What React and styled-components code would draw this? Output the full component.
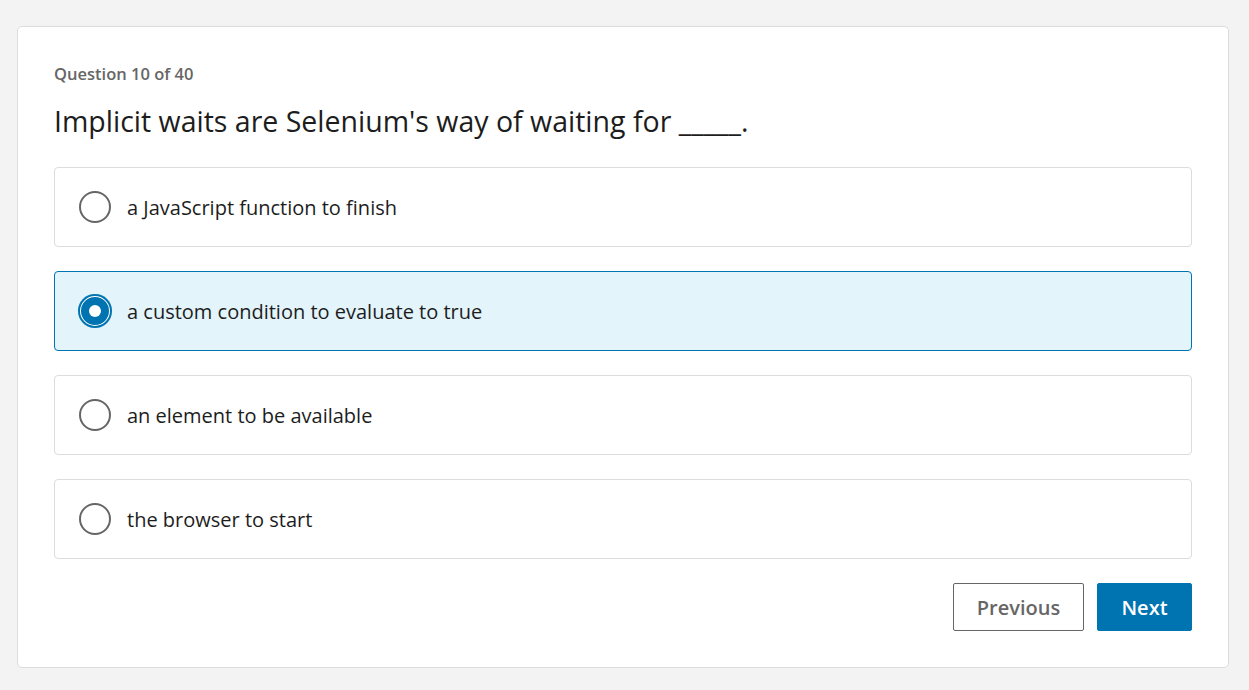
import React, { useState } from "react";
import styled, { createGlobalStyle } from "styled-components";

const Global = createGlobalStyle`
  html, body { margin: 0; padding: 0; background: #f3f3f3; }
  body { font-family: "Open Sans", "Noto Sans", sans-serif; color: #1d1d1d; }
  * { box-sizing: border-box; }
`;

const Page = styled.div`
  padding: 26px 20px 22px 17px;
  min-height: 690px;
`;

const Card = styled.div`
  background: #fff;
  border: 1px solid #dcdcdc;
  border-radius: 5px;
  padding: 36px;
`;

const Counter = styled.div`
  font-size: 16.5px;
  font-weight: 600;
  color: #666;
  line-height: 22px;
  margin-bottom: 18px;
`;

const Title = styled.h1`
  margin: 0 0 28px;
  font-size: 28.5px;
  font-weight: 400;
  line-height: 36px;
  color: #1d1d1d;
`;

const Options = styled.div`
  display: flex;
  flex-direction: column;
  gap: 24px;
`;

const Option = styled.label`
  display: flex;
  align-items: center;
  gap: 16px;
  height: 80px;
  padding: 0 24px;
  border: 1px solid ${(p) => (p.$selected ? "#0073b1" : "#dcdcdc")};
  background: ${(p) => (p.$selected ? "#e3f4fb" : "#fff")};
  border-radius: 4px;
  cursor: pointer;
  font-size: 20px;
  color: #1d1d1d;
`;

const Radio = styled.span`
  flex: none;
  width: 32px;
  height: 32px;
  border-radius: 50%;
  display: flex;
  align-items: center;
  justify-content: center;
  ${(p) =>
    p.$selected
      ? `background: #0073b1; box-shadow: inset 0 0 0 2px #0073b1, inset 0 0 0 3px #fff; width: 34px; height: 34px; margin: 0 -1px;`
      : `border: 2px solid #666; background: #fff;`}
`;

const Dot = styled.span`
  width: 12px;
  height: 12px;
  border-radius: 50%;
  background: #fff;
`;

const Actions = styled.div`
  display: flex;
  justify-content: flex-end;
  gap: 13px;
  margin-top: 24px;
`;

const Button = styled.button`
  height: 48px;
  min-width: ${(p) => (p.$primary ? 95 : 131)}px;
  padding: 0 20px;
  border-radius: 2px;
  font-family: inherit;
  font-size: 20px;
  font-weight: 600;
  cursor: pointer;
  border: 1px solid ${(p) => (p.$primary ? "#0073b1" : "#666")};
  background: ${(p) => (p.$primary ? "#0073b1" : "#fff")};
  color: ${(p) => (p.$primary ? "#fff" : "#666")};
`;

const answers = [
  "a JavaScript function to finish",
  "a custom condition to evaluate to true",
  "an element to be available",
  "the browser to start",
];

export default function App() {
  const [sel, setSel] = useState(1);
  return (
    <Page>
      <Global />
      <Card>
        <Counter>Question 10 of 40</Counter>
        <Title>Implicit waits are Selenium's way of waiting for _____.</Title>
        <Options>
          {answers.map((a, i) => (
            <Option key={a} $selected={sel === i} onClick={() => setSel(i)}>
              <Radio $selected={sel === i}>{sel === i && <Dot />}</Radio>
              {a}
            </Option>
          ))}
        </Options>
        <Actions>
          <Button>Previous</Button>
          <Button $primary>Next</Button>
        </Actions>
      </Card>
    </Page>
  );
}
